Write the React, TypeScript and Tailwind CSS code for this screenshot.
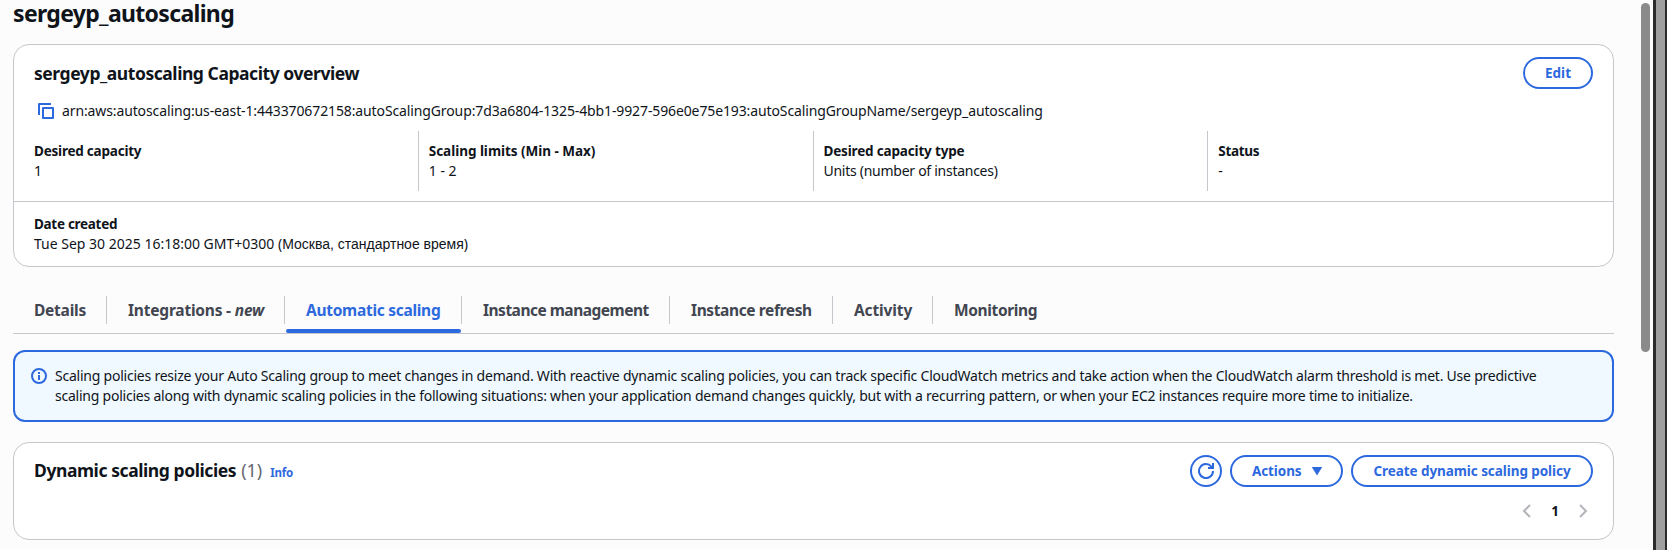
import type { ReactNode } from "react";

const stats = [
  { label: "Desired capacity", value: "1", labelClass: "tracking-[-0.22px]", valueClass: "" },
  { label: "Scaling limits (Min - Max)", value: "1 - 2", labelClass: "tracking-[-0.03px]", valueClass: "" },
  { label: "Desired capacity type", value: "Units (number of instances)", labelClass: "tracking-[-0.17px]", valueClass: "tracking-[-0.27px]" },
  { label: "Status", value: "-", labelClass: "tracking-[-0.3px]", valueClass: "" },
];

const tabs: { id: string; label: ReactNode; width: string; text: string }[] = [
  { id: "details", label: "Details", width: "w-[94px]", text: "tracking-[-0.24px]" },
  { id: "integrations", label: (<>Integrations - <i>new</i></>), width: "w-[178px]", text: "tracking-[-0.2px]" },
  { id: "automatic", label: "Automatic scaling", width: "w-[177px]", text: "tracking-[-0.28px]" },
  { id: "management", label: "Instance management", width: "w-[208px]", text: "tracking-[-0.5px]" },
  { id: "refresh", label: "Instance refresh", width: "w-[163px]", text: "tracking-[-0.38px]" },
  { id: "activity", label: "Activity", width: "w-[100px]", text: "tracking-[-0.12px]" },
  { id: "monitoring", label: "Monitoring", width: "w-[127px]", text: "tracking-[-0.36px]" },
];

function CopyIcon() {
  return (
    <svg width="16" height="16" viewBox="0 0 16 16" fill="none" stroke="#2d69de" strokeWidth="2" strokeLinejoin="round">
      <path d="M13 1H1v11" />
      <path d="M5 5h10v10H5z" />
    </svg>
  );
}

function InfoIcon() {
  return (
    <svg width="16" height="16" viewBox="0 0 16 16" fill="none" stroke="#2d69de" strokeWidth="2">
      <circle cx="8" cy="8" r="7" />
      <path d="M8 12V7M8 6V4" />
    </svg>
  );
}

function RefreshIcon() {
  return (
    <svg width="16" height="16" viewBox="0 0 16 16" fill="none" stroke="#2d69de" strokeWidth="2">
      <path d="M15 8a7 7 0 1 1-1.6-4.4L15 5.2" />
      <path d="M10 5h5V0" />
    </svg>
  );
}

function Chevron({ d }: { d: string }) {
  return (
    <svg width="16" height="16" viewBox="0 0 16 16" fill="none" stroke="#b4b4bb" strokeWidth="2">
      <path d={d} />
    </svg>
  );
}

export default function App() {
  return (
    <div className="flex h-[550px] w-[1667px] overflow-hidden bg-[#fcfcfd] font-['Noto_Sans','Liberation_Sans',sans-serif] text-[14px] leading-5 text-[#0f141a]">
      <main className="w-[1627px] px-[13px]">
        <h1 className="h-[44px] text-[23px] font-bold leading-[26px] tracking-[-0.67px]">sergeyp_autoscaling</h1>

        <section className="h-[223px] rounded-2xl border border-[#c6c6cd] bg-white">
          <div className="flex items-center justify-between px-5 pt-3">
            <h2 className="mb-px text-[17.5px] font-bold leading-[22px] tracking-[-0.44px]">sergeyp_autoscaling Capacity overview</h2>
            <button className="h-8 w-[70px] rounded-full border-2 border-[#2d69de] text-[13.5px] font-bold text-[#2d69de]">Edit</button>
          </div>
          <div className="mt-3 flex h-5 items-center gap-2 pl-6">
            <CopyIcon />
            <span className="tracking-[-0.118px]">
              arn:aws:autoscaling:us-east-1:443370672158:autoScalingGroup:7d3a6804-1325-4bb1-9927-596e0e75e193:autoScalingGroupName/sergeyp_autoscaling
            </span>
          </div>
          <div className="mt-[10px] grid h-[71px] grid-cols-4 gap-x-5 border-b border-[#c6c6cd] px-5">
            {stats.map((s, i) => (
              <div key={s.label} className={i === 0 ? "h-[60px] pt-[10px]" : "-ml-[11px] h-[60px] border-l border-[#c6c6cd] pl-[10px] pt-[10px]"}>
                <div className={`text-[13.5px] font-bold ${s.labelClass}`}>{s.label}</div>
                <div className={s.valueClass}>{s.value}</div>
              </div>
            ))}
          </div>
          <div className="px-5 pt-3">
            <div className="text-[13.5px] font-bold tracking-[-0.3px]">Date created</div>
            <div>
              Tue Sep 30 2025 16:18:00 GMT+0300 (<span className="font-['Liberation_Sans',sans-serif]">Москва, стандартное время</span>)
            </div>
          </div>
        </section>

        <nav className="mt-[22px] flex h-[45px] border-b border-[#c6c6cd] text-[15.5px] font-bold leading-6 text-[#424650]">
          {tabs.map((t, i) => (
            <div key={t.id} className={`flex shrink-0 flex-col ${t.width}`}>
              <div className={`mt-[7px] flex h-7 items-center pl-[21px] ${i < tabs.length - 1 ? "border-r border-[#c6c6cd]" : ""}`}>
                <span className={`whitespace-pre ${t.text} ${t.id === "automatic" ? "text-[#2d69de]" : ""}`}>{t.label}</span>
              </div>
              {t.id === "automatic" && <div className="mx-px mt-[5px] h-1 rounded-[2px] bg-[#2d69de]" />}
            </div>
          ))}
        </nav>

        <section className="mt-4 flex h-[72px] gap-2 rounded-xl border-2 border-[#2d69de] bg-[#f0f9ff] pl-4 pt-[14px]">
          <div className="pt-[2px]"><InfoIcon /></div>
          <p className="whitespace-nowrap">
            <span className="tracking-[-0.227px]">Scaling policies resize your Auto Scaling group to meet changes in demand. With reactive dynamic scaling policies, you can track specific CloudWatch metrics and take action when the CloudWatch alarm threshold is met. Use predictive</span>
            <br />
            <span className="tracking-[-0.228px]">scaling policies along with dynamic scaling policies in the following situations: when your application demand changes quickly, but with a recurring pattern, or when your EC2 instances require more time to initialize.</span>
          </p>
        </section>

        <section className="mt-5 h-[98px] rounded-2xl border border-[#c6c6cd] bg-white px-5 pt-3">
          <div className="flex h-8 items-center justify-between">
            <div className="flex items-baseline">
              <h2 className="text-[17.5px] font-bold leading-[22px] tracking-[-0.42px]">Dynamic scaling policies</h2>
              <span className="ml-[5px] text-[18px] leading-[22px] text-[#656871]">(1)</span>
              <a className="ml-2 text-[11.5px] font-bold tracking-[-0.25px] text-[#2d69de]">Info</a>
            </div>
            <div className="flex gap-2 text-[13.5px] font-bold text-[#2d69de]">
              <button className="flex size-8 items-center justify-center rounded-full border-2 border-[#2d69de]"><RefreshIcon /></button>
              <button className="flex h-8 w-[113px] items-center rounded-full border-2 border-[#2d69de] pl-5">
                <span className="tracking-[-0.1px]">Actions</span>
                <svg className="ml-[10px]" width="10" height="8" viewBox="0 0 10 8"><path d="M0 0h10L5 8z" fill="#2d69de" stroke="#2d69de" strokeWidth="0.5" /></svg>
              </button>
              <button className="h-8 w-[242px] rounded-full border-2 border-[#2d69de] tracking-[-0.07px]">Create dynamic scaling policy</button>
            </div>
          </div>
          <div className="mt-[14px] flex h-5 items-center justify-end pr-[2px]">
            <Chevron d="M11 2 5 8l6 6" />
            <span className="w-[40px] text-center text-[13.5px] font-bold">1</span>
            <Chevron d="m5 2 6 6-6 6" />
          </div>
        </section>
      </main>

      <div className="flex w-[26px] pl-[14px] pt-[3px]">
        <div className="h-[349px] w-[9px] rounded-full bg-[#8a8a8a]" />
      </div>
      <div className="h-full w-[14px] border-l-[3px] border-r-2 border-[#2b2b2b] bg-[#9f9f9f]" />
    </div>
  );
}
